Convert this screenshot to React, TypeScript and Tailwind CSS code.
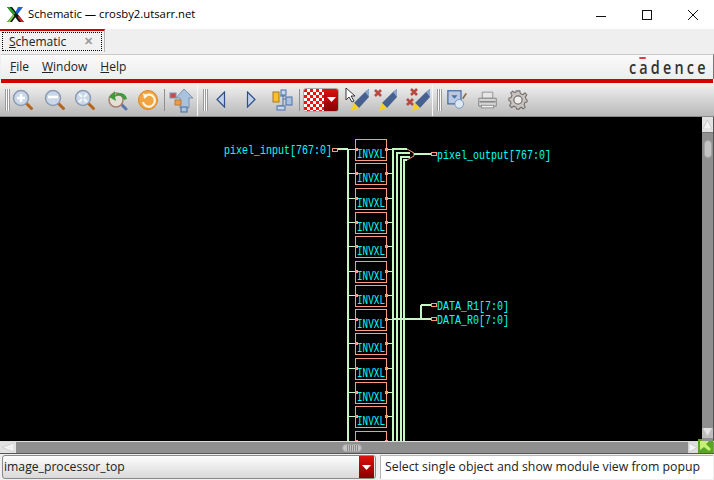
import React from "react";

const ui = "font-['Open_Sans',sans-serif]";

const XLogo = () => (
  <svg width="17" height="17" viewBox="0 0 17 17" className="shrink-0">
    <path d="M0 1 L5 1 L17 16 L12 16 Z" fill="#111" />
    <path d="M0 1 L3 1 L8.5 7.5 L6.5 9 Z" fill="#2aa52a" />
    <path d="M11 1 L16 1 L10.5 8.5 L8.5 6 Z" fill="#1f5fd0" />
    <path d="M6.5 8.5 L8.5 11 L5 16 L0 16 Z" fill="#111" />
    <path d="M6.5 8.5 L7.5 10 L3 16 L0 16 Z" fill="#7ac943" />
    <path d="M10.5 11 L14 16 L17 16 L12 10 Z" fill="#d4202a" />
  </svg>
);

const WinControls = () => (
  <div className="flex items-center">
    <svg width="12" height="12" viewBox="0 0 12 12" className="mr-[34px]">
      <path d="M1 7.5 H11" stroke="#111" strokeWidth="1" />
    </svg>
    <svg width="12" height="12" viewBox="0 0 12 12" className="mr-[34px]">
      <rect x="1.5" y="1.5" width="9" height="9" fill="none" stroke="#111" />
    </svg>
    <svg width="12" height="12" viewBox="0 0 12 12" className="mr-[15px]">
      <path d="M1 1 L11 11 M11 1 L1 11" stroke="#111" />
    </svg>
  </div>
);

const Grip = () => (
  <div className="flex h-[22px] w-[5px] shrink-0">
    <div className="w-[1px] bg-[#9a9a9a]" />
    <div className="w-[1px] bg-[#fafafa]" />
    <div className="w-[1px] bg-[#9a9a9a]" />
    <div className="w-[1px] bg-[#fafafa]" />
    <div className="w-[1px] bg-[#9a9a9a]" />
  </div>
);

const Sep = () => <div className="w-[1px] h-[22px] bg-[#8f8f8f] shrink-0" />;

const Break = () => <div className="w-[1px] h-[33px] bg-[#f7f7f7] shrink-0" />;

const Lens = ({ children }: { children?: React.ReactNode }) => (
  <svg width="22" height="22" viewBox="0 0 22 22" className="shrink-0">
    <path d="M13 13 L19.5 19.5" stroke="#b5651d" strokeWidth="3" strokeLinecap="round" />
    <circle cx="9" cy="9" r="7.5" fill="#c9d7e8" stroke="#8c9bb0" strokeWidth="1.5" />
    {children}
  </svg>
);

const Pencil = ({ children }: { children?: React.ReactNode }) => (
  <svg width="26" height="26" viewBox="0 0 26 26" className="shrink-0">
    <path d="M9 16 L20 5 L24 2 L24 10 L14 21 Z" fill="#46608f" />
    <path d="M20 5 L24 2 L24 10 Z" fill="#8ca4cc" />
    <path d="M9 16 L14 21 L6 24 Z" fill="#f6d21e" />
    {children}
  </svg>
);

const RedX = ({ x, y }: { x: number; y: number }) => (
  <path d={`M${x} ${y} l6 6 M${x + 6} ${y} l-6 6`} stroke="#b8493f" strokeWidth="2.6" />
);

const Dropdown = ({ className }: { className: string }) => (
  <div className={`flex items-center justify-center bg-gradient-to-b from-[#dd1111] to-[#8a0000] ${className}`}>
    <svg width="9" height="5" viewBox="0 0 9 5">
      <path d="M0 0 H9 L4.5 5 Z" fill="#fff" />
    </svg>
  </div>
);

const Toolbar = () => (
  <div className="flex items-center h-[34px] pl-[5px] bg-gradient-to-b from-[#f2f2f2] to-[#b9b9b9] border-b border-[#8a8a8a]">
    <Grip />
    <div className="ml-[2px]">
      <Lens>
        <path d="M5 9 H13 M9 5 V13" stroke="#fff" strokeWidth="2.6" />
      </Lens>
    </div>
    <div className="ml-[10px]">
      <Lens>
        <path d="M4 8 H14" stroke="#fff" strokeWidth="2.6" />
      </Lens>
    </div>
    <div className="ml-[8px]">
      <Lens>
        <path d="M5 5 L8 8 M13 5 L10 8 M5 13 L8 10 M13 13 L10 10" stroke="#f4f7fb" strokeWidth="2" />
      </Lens>
    </div>
    <svg width="24" height="24" viewBox="0 0 24 24" className="ml-[10px] shrink-0">
      <path d="M14 15 L20 21" stroke="#5a76a8" strokeWidth="3" strokeLinecap="round" />
      <circle cx="10" cy="12" r="7" fill="#e4e0d8" stroke="#a9806a" strokeWidth="1.5" />
      <path d="M21 11 C20 5 13 3 9 7 L9 3 L3 9 L10 13 L9 9 C12 7 16 7 18 12 Z" fill="#3f9a3c" />
    </svg>
    <svg width="22" height="22" viewBox="0 0 22 22" className="ml-[7px] shrink-0">
      <circle cx="11" cy="11" r="9.5" fill="#f2a441" stroke="#d98525" />
      <path d="M8 7 A6 6 0 1 1 6 13" fill="none" stroke="#fff5dc" strokeWidth="2.2" />
      <path d="M6 4 L11 7 L7 10 Z" fill="#fff5dc" />
    </svg>
    <div className="ml-[5px]">
      <Sep />
    </div>
    <svg width="26" height="26" viewBox="0 0 26 26" className="ml-[4px] shrink-0">
      <path d="M15 2 L24 11 H20 V21 H11 V11 H7 Z" fill="#a9c2de" stroke="#7d93ae" />
      <rect x="1" y="6" width="6" height="5" fill="#c84a4a" stroke="#7d93ae" />
      <rect x="6" y="13" width="6" height="5" fill="#eb9b4a" stroke="#b77a3a" />
      <rect x="12" y="20" width="6" height="5" fill="#a9c2de" stroke="#476a9a" />
    </svg>
    <div className="ml-[2px]">
      <Break />
    </div>
    <div className="ml-[5px]">
      <Grip />
    </div>
    <svg width="10" height="17" viewBox="0 0 10 17" className="ml-[8px] shrink-0">
      <path d="M8.5 1 V16 L1 8.5 Z" fill="#c2d1e8" stroke="#2f4f8a" strokeWidth="1.2" />
    </svg>
    <svg width="10" height="17" viewBox="0 0 10 17" className="ml-[20px] shrink-0">
      <path d="M1.5 1 V16 L9 8.5 Z" fill="#c2d1e8" stroke="#2f4f8a" strokeWidth="1.2" />
    </svg>
    <svg width="22" height="22" viewBox="0 0 22 22" className="ml-[16px] shrink-0">
      <path d="M8 7 H14 M11 4 V17 M11 10 H14 M6 17 H11" stroke="#4a6fa5" fill="none" />
      <rect x="1" y="3" width="6" height="10" fill="#f6c02c" stroke="#a9761a" />
      <rect x="9" y="1" width="5" height="5" fill="#c6d6ea" stroke="#4a6fa5" />
      <rect x="14" y="8" width="6" height="8" fill="#a9c2de" stroke="#4a6fa5" />
      <rect x="5" y="17" width="8" height="4" fill="#c6d6ea" stroke="#4a6fa5" />
    </svg>
    <div className="ml-[5px]">
      <Sep />
    </div>
    <div className="ml-[3px] flex h-[24px] w-[36px] rounded-[3px] border border-[#a9a9a9] overflow-hidden shrink-0">
      <svg width="20" height="22" className="shrink-0">
        <defs>
          <pattern id="chk" width="6" height="6" patternUnits="userSpaceOnUse">
            <rect width="6" height="6" fill="#fff" />
            <rect width="3" height="3" fill="#f01010" />
            <rect x="3" y="3" width="3" height="3" fill="#f01010" />
          </pattern>
        </defs>
        <rect width="20" height="22" fill="url(#chk)" />
      </svg>
      <Dropdown className="flex-1" />
    </div>
    <div className="ml-[6px]">
      <Pencil>
        <path d="M1 1 V13 L4 10 L7 15 L9 14 L6 9 L10 9 Z" fill="#fff" stroke="#222" strokeWidth="0.9" />
      </Pencil>
    </div>
    <div className="ml-[2px]">
      <Pencil>
        <RedX x={2} y={3} />
      </Pencil>
    </div>
    <div className="ml-[7px]">
      <Pencil>
        <RedX x={5} y={2} />
        <RedX x={1} y={12} />
      </Pencil>
    </div>
    <Break />
    <div className="ml-[4px]">
      <Grip />
    </div>
    <svg width="21" height="21" viewBox="0 0 24 24" className="ml-[5px] shrink-0">
      <rect x="1" y="2" width="15" height="15" fill="#b9c9e4" stroke="#4a6fa5" strokeWidth="1.5" />
      <path d="M5 7 H12 L8.5 11 Z" fill="#4a6fa5" />
      <circle cx="14" cy="17" r="5" fill="#dce7f3" stroke="#6f8fb5" />
      <path d="M18 11 L22 5" stroke="#8a6a3a" strokeWidth="2" />
    </svg>
    <svg width="21" height="20" viewBox="0 0 24 22" className="ml-[9px] shrink-0">
      <path d="M6 2 H18 V9 H6 Z" fill="#e6e6e6" stroke="#8a8a8a" />
      <path d="M2 9 H22 V18 H2 Z" fill="#d6d6d6" stroke="#7c7c7c" strokeLinejoin="round" />
      <path d="M3 13 H21" stroke="#8a8a8a" strokeWidth="2" />
      <rect x="5" y="17" width="14" height="3" fill="#efefef" stroke="#8a8a8a" />
    </svg>
    <svg width="20" height="20" viewBox="0 0 22 22" className="ml-[10px] shrink-0">
      <path
        d="M9 1 H13 L13.6 4 L16.2 5 L18.8 3.3 L20.7 5.2 L19 7.8 L20 10.4 L21 11 V13 L18.6 13.8 L17.6 16.2 L19 18.8 L16.8 20.7 L14.4 19 L12.8 20 L12.4 21 H9.6 L8.8 18.8 L6.4 17.8 L3.8 19.2 L1.8 17 L3.4 14.6 L2.4 12.2 L1 11.6 V9 L3.4 8.2 L4.4 5.8 L3 3.2 L5.2 1.4 L7.6 3 L8.6 2.4 Z"
        fill="#c9c5c3"
        stroke="#75706e"
        strokeWidth="1.2"
      />
      <circle cx="11" cy="11" r="4.5" fill="#efefef" stroke="#75706e" strokeWidth="1.4" />
    </svg>
  </div>
);

const boxes = Array.from({ length: 13 }, (_, i) => 139 + i * 24.3);
const wire = "#c4f7c4";
const pin = "#ff9a80";

const Canvas = () => (
  <div className="flex-1 bg-black overflow-hidden">
    <svg width="702" height="324" viewBox="0 117 702 324" className="block" shapeRendering="crispEdges">
      {/* input bus */}
      <path d="M337 149 H348" stroke={wire} strokeWidth="2" />
      <path d="M348 149 V441" stroke={wire} strokeWidth="2" />
      <rect x="332.5" y="148.5" width="5" height="3" fill="none" stroke={pin} />

      {/* output rails */}
      <path d="M393 149 V441 M397 153 V441 M401 157 V441 M404 160 V441" stroke={wire} strokeWidth="2" />
      <path d="M392 149 H407 M396 153 H410 M400 157 H410 M403 160 H407" stroke={wire} strokeWidth="2" />
      <path d="M407 149 L414 153 V156 L407 160" fill="none" stroke={pin} shapeRendering="auto" />
      <path d="M414 154 H431" stroke={wire} strokeWidth="2" />
      <rect x="431.5" y="152.5" width="5" height="3" fill="none" stroke={pin} />

      {/* data pins */}
      <path d="M392 319 H431" stroke={wire} strokeWidth="2" />
      <path d="M421 305 H431 M421 305 V319" stroke={wire} strokeWidth="2" />
      <rect x="431.5" y="303.5" width="5" height="3" fill="none" stroke={pin} />
      <rect x="431.5" y="317.5" width="5" height="3" fill="none" stroke={pin} />

      {boxes.map((y, i) => (
        <g key={y}>
          <path d={`M349 ${Math.round(y) + 10.5} H355 M387 ${Math.round(y) + 10.5} H392`} stroke={wire} />
          <rect x="355.5" y={Math.round(y) + 0.5} width="31" height="21" fill="#000" stroke={pin} />
          <rect x="355" y={Math.round(y) + 9} width="3" height="3" fill={pin} />
          <rect x="385" y={Math.round(y) + 9} width="3" height="3" fill={pin} />
          {i < 12 && (
            <text
              x="357"
              y={Math.round(y) + 19}
              fill="#00ffff"
              fontSize="12"
              textLength="28"
              lengthAdjust="spacingAndGlyphs"
              className="font-['Liberation_Mono',monospace]"
            >
              INVXL
            </text>
          )}
        </g>
      ))}

      <g fill="#00ffff" fontSize="12" className="font-['Liberation_Mono',monospace]">
        <text x="224" y="154" textLength="108" lengthAdjust="spacingAndGlyphs">pixel_input[767:0]</text>
        <text x="437" y="159" textLength="114" lengthAdjust="spacingAndGlyphs">pixel_output[767:0]</text>
        <text x="437" y="310" textLength="72" lengthAdjust="spacingAndGlyphs">DATA_R1[7:0]</text>
        <text x="437" y="324" textLength="72" lengthAdjust="spacingAndGlyphs">DATA_R0[7:0]</text>
      </g>
    </svg>
  </div>
);

const ScrollThumb = () => (
  <div className="h-[8px] w-[20px] rounded-full bg-[#c4c4c4] border border-[#a5a5a5] flex justify-center gap-[1px] overflow-hidden">
    {[0, 1, 2, 3, 4, 5].map((i) => (
      <div key={i} className="w-[1px] h-full bg-[#8a8a8a]" />
    ))}
  </div>
);

export default function App() {
  return (
    <div className={`w-[714px] h-[480px] flex flex-col overflow-hidden bg-[#efefef] ${ui}`}>
      {/* window title */}
      <div className="flex items-center justify-between h-[29px] bg-white pl-[7px] shrink-0">
        <div className="flex items-center gap-[4px]">
          <XLogo />
          <span className="text-[11.3px] text-black">Schematic — crosby2.utsarr.net</span>
        </div>
        <WinControls />
      </div>

      {/* tab row */}
      <div className="h-[25px] shrink-0 bg-[#efefef]">
        <div className="w-[105px] h-[23px] border-t-2 border-[#d40000] border-r border-r-[#b5b5b5] bg-[#f1f1f1] p-[1px] pl-[2px]">
          <div className="flex items-center justify-between h-[19px] w-[100px] border border-dotted border-black pl-[6px] pr-[8px] text-[12px] text-[#222]">
            <span>
              <span className="underline">S</span>chematic
            </span>
            <span className="text-[#9b9b9b] font-bold text-[11px]">✕</span>
          </div>
        </div>
      </div>

      {/* menu bar */}
      <div className="ml-[1px] shrink-0 border-t border-[#c9c9c9] border-r border-r-[#777] bg-gradient-to-b from-[#fafafa] to-[#ededed] h-[25px] flex items-center justify-between pl-[9px] pr-[7px] text-[12px] text-[#222]">
        <div className="flex gap-[13px]">
          <span>
            <span className="underline">F</span>ile
          </span>
          <span>
            <span className="underline">W</span>indow
          </span>
          <span>
            <span className="underline">H</span>elp
          </span>
        </div>
        <div className="relative text-[18px] font-semibold tracking-[4px] text-[#333] leading-none scale-x-[0.8] origin-right -mr-[3px] -mt-[1px]">
          cadence
          <span className="absolute left-[13px] -top-[1px] w-[8px] h-[2px] bg-[#d94040]" />
        </div>
      </div>
      <div className="h-[4px] mr-[1px] ml-[1px] bg-[#d40000] shrink-0" />

      <Toolbar />

      {/* canvas + vertical scrollbar */}
      <div className="flex flex-1 min-h-0 bg-[#8f8f8f]">
        <Canvas />
        <div className="w-[12px] bg-[#8f8f8f] border-r border-[#555] flex flex-col items-center relative shrink-0">
          <div className="w-full h-[16px] bg-[#e2e2e2] flex items-center justify-center border-b border-[#777]">
            <svg width="9" height="9" viewBox="0 0 9 9">
              <path d="M4.5 0 L9 9 H0 Z" fill="#f4f4f4" stroke="#bbb" strokeWidth="0.6" />
            </svg>
          </div>
          <div className="w-[8px] h-[18px] mt-[7px] rounded-full bg-[#c4c4c4] border border-[#a5a5a5]" />
          <div className="absolute bottom-[3px] w-full h-[10px] bg-[#bdbdbd] flex justify-center">
            <svg width="9" height="8" viewBox="0 0 9 8">
              <path d="M4.5 8 L9 0 H0 Z" fill="#e2e2e2" />
            </svg>
          </div>
        </div>
      </div>

      {/* horizontal scrollbar */}
      <div className="h-[12px] flex items-center shrink-0 bg-[#8f8f8f] border-t border-[#dedede]">
        <div className="w-[16px] h-full bg-[#e2e2e2] flex items-center justify-center">
          <svg width="12" height="9" viewBox="0 0 12 9">
            <path d="M0 4.5 L12 0 V9 Z" fill="#f2f2f2" stroke="#bbb" strokeWidth="0.5" />
          </svg>
        </div>
        <div className="ml-[326px]">
          <ScrollThumb />
        </div>
        <div className="ml-auto flex items-center h-full">
          <div className="w-[10px] h-full bg-[#dcdcdc]">
            <svg width="10" height="11" viewBox="0 0 10 11">
              <path d="M9 5.5 L1 1 V10 Z" fill="#f4f4f4" stroke="#bbb" strokeWidth="0.5" />
            </svg>
          </div>
          <svg width="15" height="14" viewBox="0 0 15 14" className="-mt-[3px] mr-[1px] shrink-0">
            <rect width="15" height="14" fill="#5ba526" />
            <path d="M2 2 H11 L8 5 L13 10 L11 12 L6 8 L2 11 Z" fill="#c6f07a" />
          </svg>
        </div>
      </div>

      {/* status row */}
      <div className="h-[27px] shrink-0 flex items-center gap-[4px] pl-[2px] pr-[1px] bg-[#efefef] border-t border-[#555]">
        <div className="flex h-[24px] w-[374px] border border-[#8a8a8a] rounded-[3px] overflow-hidden bg-gradient-to-b from-[#fdfdfd] to-[#d9d9d9] shrink-0">
          <div className="flex-1 pl-[1px] flex items-center text-[12.2px] text-[#222]">image_processor_top</div>
          <Dropdown className="w-[15px] mr-[1px]" />
        </div>
        <div className="flex-1 h-[24px] bg-white border-l border-t border-[#b5b5b5] pl-[4px] flex items-center text-[12.3px] text-[#222] whitespace-nowrap overflow-hidden">
          Select single object and show module view from popup
        </div>
      </div>
    </div>
  );
}
